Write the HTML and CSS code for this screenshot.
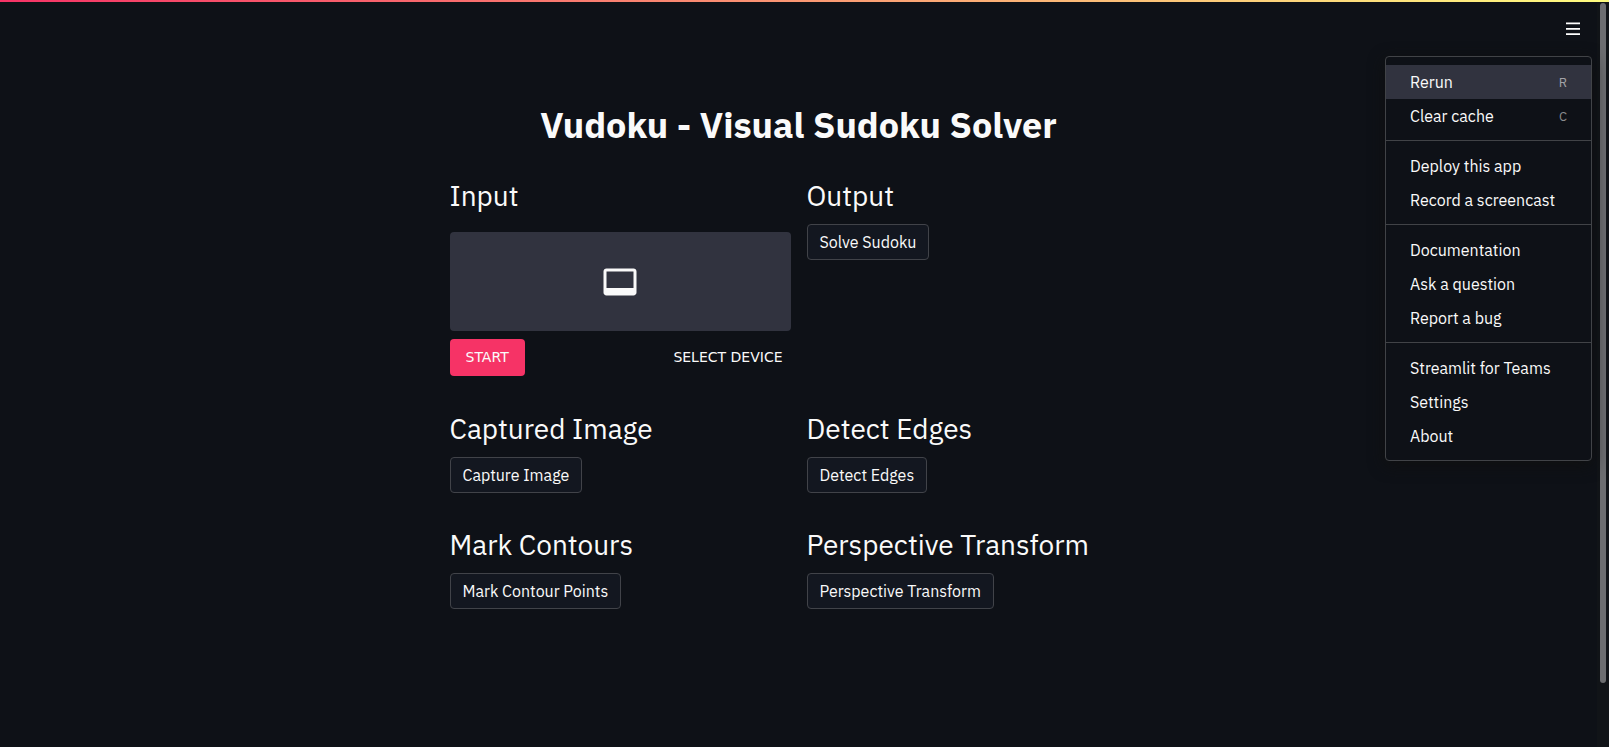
FILE: index.html
```html
<!DOCTYPE html>
<html lang="en">
<head>
<meta charset="utf-8">
<meta name="viewport" content="width=device-width, initial-scale=1">
<title>Vudoku</title>
<link rel="stylesheet" href="styles.css">
</head>
<body>
<div class="decoration"></div>
<div class="app">
  <div class="view">
    <header class="toolbar">
      <button class="menu-button" type="button" aria-label="Main menu" aria-expanded="true">
        <svg class="menu-icon" viewBox="0 0 14 14" aria-hidden="true"><path d="M0 1.4h14M0 6.9h14M0 12.2h14" fill="none" stroke="#fff" stroke-width="1.75"/></svg>
      </button>
      <nav class="menu" aria-label="Main menu">
        <ul class="menu-group">
          <li><button class="menu-item active" type="button"><span>Rerun</span><kbd class="shortcut">R</kbd></button></li>
          <li><button class="menu-item" type="button"><span>Clear cache</span><kbd class="shortcut">C</kbd></button></li>
        </ul>
        <ul class="menu-group">
          <li><button class="menu-item" type="button">Deploy this app</button></li>
          <li><button class="menu-item" type="button">Record a screencast</button></li>
        </ul>
        <ul class="menu-group">
          <li><button class="menu-item" type="button">Documentation</button></li>
          <li><button class="menu-item" type="button">Ask a question</button></li>
          <li><button class="menu-item" type="button">Report a bug</button></li>
        </ul>
        <ul class="menu-group">
          <li><button class="menu-item" type="button">Streamlit for Teams</button></li>
          <li><button class="menu-item" type="button">Settings</button></li>
          <li><button class="menu-item" type="button">About</button></li>
        </ul>
      </nav>
    </header>
    <main class="content">
      <h1 class="title">Vudoku - Visual Sudoku Solver</h1>
      <div class="grid">
        <section class="cell">
          <h2 class="heading">Input</h2>
          <div class="player">
            <div class="video">
              <svg class="video-icon" viewBox="0 0 24 24" role="img" aria-label="Video"><path fill="currentColor" d="M21 3H3c-1.11 0-2 .89-2 2v14c0 1.1.89 2 2 2h18c1.1 0 2-.9 2-2V5c0-1.11-.9-2-2-2zm0 13H3V5h18v11z"/></svg>
            </div>
            <div class="controls">
              <button class="start" type="button">START</button>
              <button class="device" type="button">SELECT DEVICE</button>
            </div>
          </div>
        </section>
        <section class="cell">
          <h2 class="heading">Output</h2>
          <button class="button" type="button">Solve Sudoku</button>
        </section>
        <section class="cell">
          <h2 class="heading">Captured Image</h2>
          <button class="button" type="button">Capture Image</button>
        </section>
        <section class="cell">
          <h2 class="heading">Detect Edges</h2>
          <button class="button" type="button">Detect Edges</button>
        </section>
        <section class="cell">
          <h2 class="heading">Mark Contours</h2>
          <button class="button" type="button">Mark Contour Points</button>
        </section>
        <section class="cell">
          <h2 class="heading">Perspective Transform</h2>
          <button class="button" type="button">Perspective Transform</button>
        </section>
      </div>
    </main>
  </div>
  <div class="scrollbar" aria-hidden="true"><div class="thumb"></div></div>
</div>
</body>
</html>
```
FILE: styles.css
```css
* { box-sizing: border-box; }

body {
  margin: 0;
  background: #0e1117;
  color: #fafafa;
  font: 16px/26px "IBM Plex Sans", Roboto, "Liberation Sans", sans-serif;
  display: flex;
  flex-direction: column;
  min-height: 100vh;
}

button { font: inherit; color: inherit; }
h1, h2, ul { margin: 0; padding: 0; }
ul { list-style: none; }

.decoration {
  height: 2px;
  background: linear-gradient(to right, #f63366, #fffd80);
}

.app { flex: 1; display: flex; }
.view { flex: 1; min-width: 0; }

.toolbar {
  position: relative;
  display: flex;
  justify-content: flex-end;
  padding: 16px 11px 0 0;
}

.menu-button {
  display: flex;
  align-items: center;
  justify-content: center;
  width: 26px;
  height: 22px;
  padding: 0;
  border: 0;
  background: none;
}
.menu-icon { width: 14px; height: 14px; }

.menu {
  position: absolute;
  top: 54px;
  right: 5px;
  width: 207px;
  border: 1px solid #414347;
  border-radius: 4px;
  background: #0e1117;
  box-shadow: 0 4px 16px #101010;
  z-index: 1;
}
.menu-group { padding: 8px 0 7px; }
.menu-group + .menu-group { border-top: 1px solid #414347; }
.menu-item {
  display: flex;
  align-items: center;
  justify-content: space-between;
  width: 100%;
  padding: 4px 24px;
  border: 0;
  background: none;
  white-space: nowrap;
  text-align: left;
}
.menu-item.active { background: #31333f; }
.shortcut {
  padding-top: 2px;
  font: 13px/18px "IBM Plex Sans", Roboto, "Liberation Sans", sans-serif;
  color: #8a8b8e;
}
.active .shortcut { color: #a3a3a8; }

.content {
  max-width: 730px;
  margin: 0 auto;
  padding: 63px 16px 96px;
}
.title {
  font-size: 36px;
  line-height: 44px;
  font-weight: 700;
  text-align: center;
}
.grid {
  display: grid;
  grid-template-columns: 1fr 1fr;
  column-gap: 16px;
  row-gap: 34px;
  padding-top: 31px;
}
.cell { min-width: 0; }
.heading {
  margin-bottom: 10px;
  font-size: 28px;
  line-height: 36px;
  font-weight: 400;
}
.button {
  padding: 4px 12px;
  border: 1px solid #414349;
  border-radius: 4px;
  background: #131720;
}

.player { padding: 8px 0 1px; }
.video {
  display: flex;
  align-items: center;
  justify-content: center;
  height: 99px;
  border-radius: 4px;
  background: #31333f;
}
.video-icon { width: 36px; height: 36px; }
.controls {
  display: flex;
  justify-content: space-between;
  margin-top: 8px;
}
.start, .device {
  padding: 6px 16px;
  border: 0;
  border-radius: 4px;
  background: #f63366;
  font: 14px/25px "DejaVu Sans", sans-serif;
  text-transform: uppercase;
}
.device { padding: 6px 8px; background: none; }

.scrollbar {
  width: 12px;
  padding: 1px 3px;
  background: #111418;
}
.thumb {
  height: 91vh;
  border-radius: 3px;
  background: #6c6d70;
}
```
